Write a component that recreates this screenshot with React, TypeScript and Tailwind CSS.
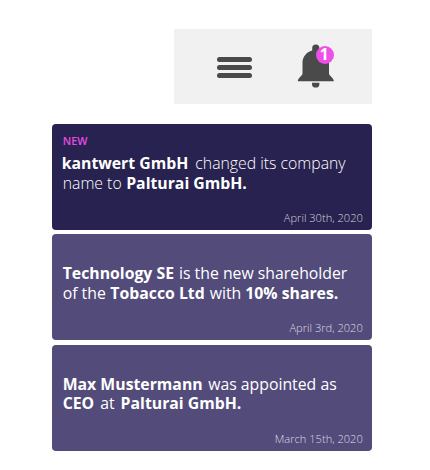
import React from "react";

type Run = { text: string; className: string };
type Item = { lines: Run[][]; date: string; isNew?: boolean; card: string; dateClass: string };

const items: Item[] = [
  {
    isNew: true,
    card: "bg-[#282250]",
    lines: [
      [
        { text: "kantwert GmbH", className: "-ml-px font-bold" },
        { text: "changed its company", className: "ml-[7px] font-light" },
      ],
      [
        { text: "name to", className: "font-light" },
        { text: "Palturai GmbH.", className: "ml-[4.5px] font-bold" },
      ],
    ],
    date: "April 30th, 2020",
    dateClass: "text-[#d4d3dc]",
  },
  {
    card: "bg-[#534b7a]",
    lines: [
      [
        { text: "Technology SE", className: "font-bold" },
        { text: "is the new shareholder", className: "ml-[5px]" },
      ],
      [
        { text: "of the", className: "" },
        { text: "Tobacco Ltd", className: "ml-[4.5px] font-bold" },
        { text: "with", className: "ml-[5px]" },
        { text: "10% shares.", className: "ml-[4px] font-bold" },
      ],
    ],
    date: "April 3rd, 2020",
    dateClass: "text-[#dddbe4]",
  },
  {
    card: "bg-[#534b7a]",
    lines: [
      [
        { text: "Max Mustermann", className: "font-bold" },
        { text: "was appointed as", className: "ml-[5.5px]" },
      ],
      [
        { text: "CEO", className: "font-bold" },
        { text: "at", className: "ml-[6px]" },
        { text: "Palturai GmbH.", className: "ml-[6px] font-bold" },
      ],
    ],
    date: "March 15th, 2020",
    dateClass: "text-[#dddbe4]",
  },
];

function BellIcon() {
  return (
    <svg width="38" height="45" viewBox="0 0 38 45" fill="#4a4a4a">
      <path d="M15.2 6.500V4a3.600 3.600 0 0 1 7.200 0v2.500C28.300 8.200 32 13 32 19v10.500c0 2 4.900 4.700 4.900 7.800H.8c0-3.100 4.700-5.800 4.700-7.800V19C5.500 13 9.200 8.200 15.200 6.500Z" />
      <path d="M15 38.700h7.400v1.200a3.700 3.700 0 0 1-7.400 0Z" />
    </svg>
  );
}

export default function App() {
  return (
    <div className="h-[470px] w-[430px] overflow-hidden bg-white pl-[52px] pt-[29px] font-['Open_Sans',sans-serif]">
      <header className="ml-[122px] flex h-[75px] w-[198px] bg-[#f1f1f1]">
        <button aria-label="Menu" className="ml-[43px] mt-[28px] flex h-[21px] w-[34.500px] flex-col gap-[3px]">
          <span className="h-[5px] w-full rounded-full bg-[#4a4a4a]" />
          <span className="h-[5px] w-full rounded-full bg-[#4a4a4a]" />
          <span className="h-[5px] w-full rounded-full bg-[#4a4a4a]" />
        </button>
        <div className="relative ml-[45.500px] mt-[15px] h-[45px] w-[38px]">
          <BellIcon />
          <span className="absolute left-[18.500px] top-[1.500px] flex h-[18px] w-[18px] items-center justify-center rounded-full bg-[#ee4fe8] pr-[0.500px] text-[15.500px] font-bold leading-none text-white">
            1
          </span>
        </div>
      </header>

      <main className="mt-[20px] flex flex-col gap-[4.300px]">
        {items.map((item) => (
          <article key={item.date} className={`flex h-[106px] w-[320.300px] flex-col rounded-[4px] pl-[10.700px] pr-[9.500px] pt-[11px] ${item.card}`}>
            <div className="h-[19px] text-[10.800px] font-semibold leading-[12px] text-[#e64be4]">{item.isNew ? "NEW" : ""}</div>
            <div className="text-[15.800px] leading-[19.500px] text-white">
              {item.lines.map((line, i) => (
                <div key={i} className="flex whitespace-nowrap">
                  {line.map((run) => (
                    <span key={run.text} className={run.className}>{run.text}</span>
                  ))}
                </div>
              ))}
            </div>
            <time className={`mt-auto pb-[4px] text-right text-[11.100px] font-light leading-[16px] ${item.dateClass}`}>{item.date}</time>
          </article>
        ))}
      </main>
    </div>
  );
}
